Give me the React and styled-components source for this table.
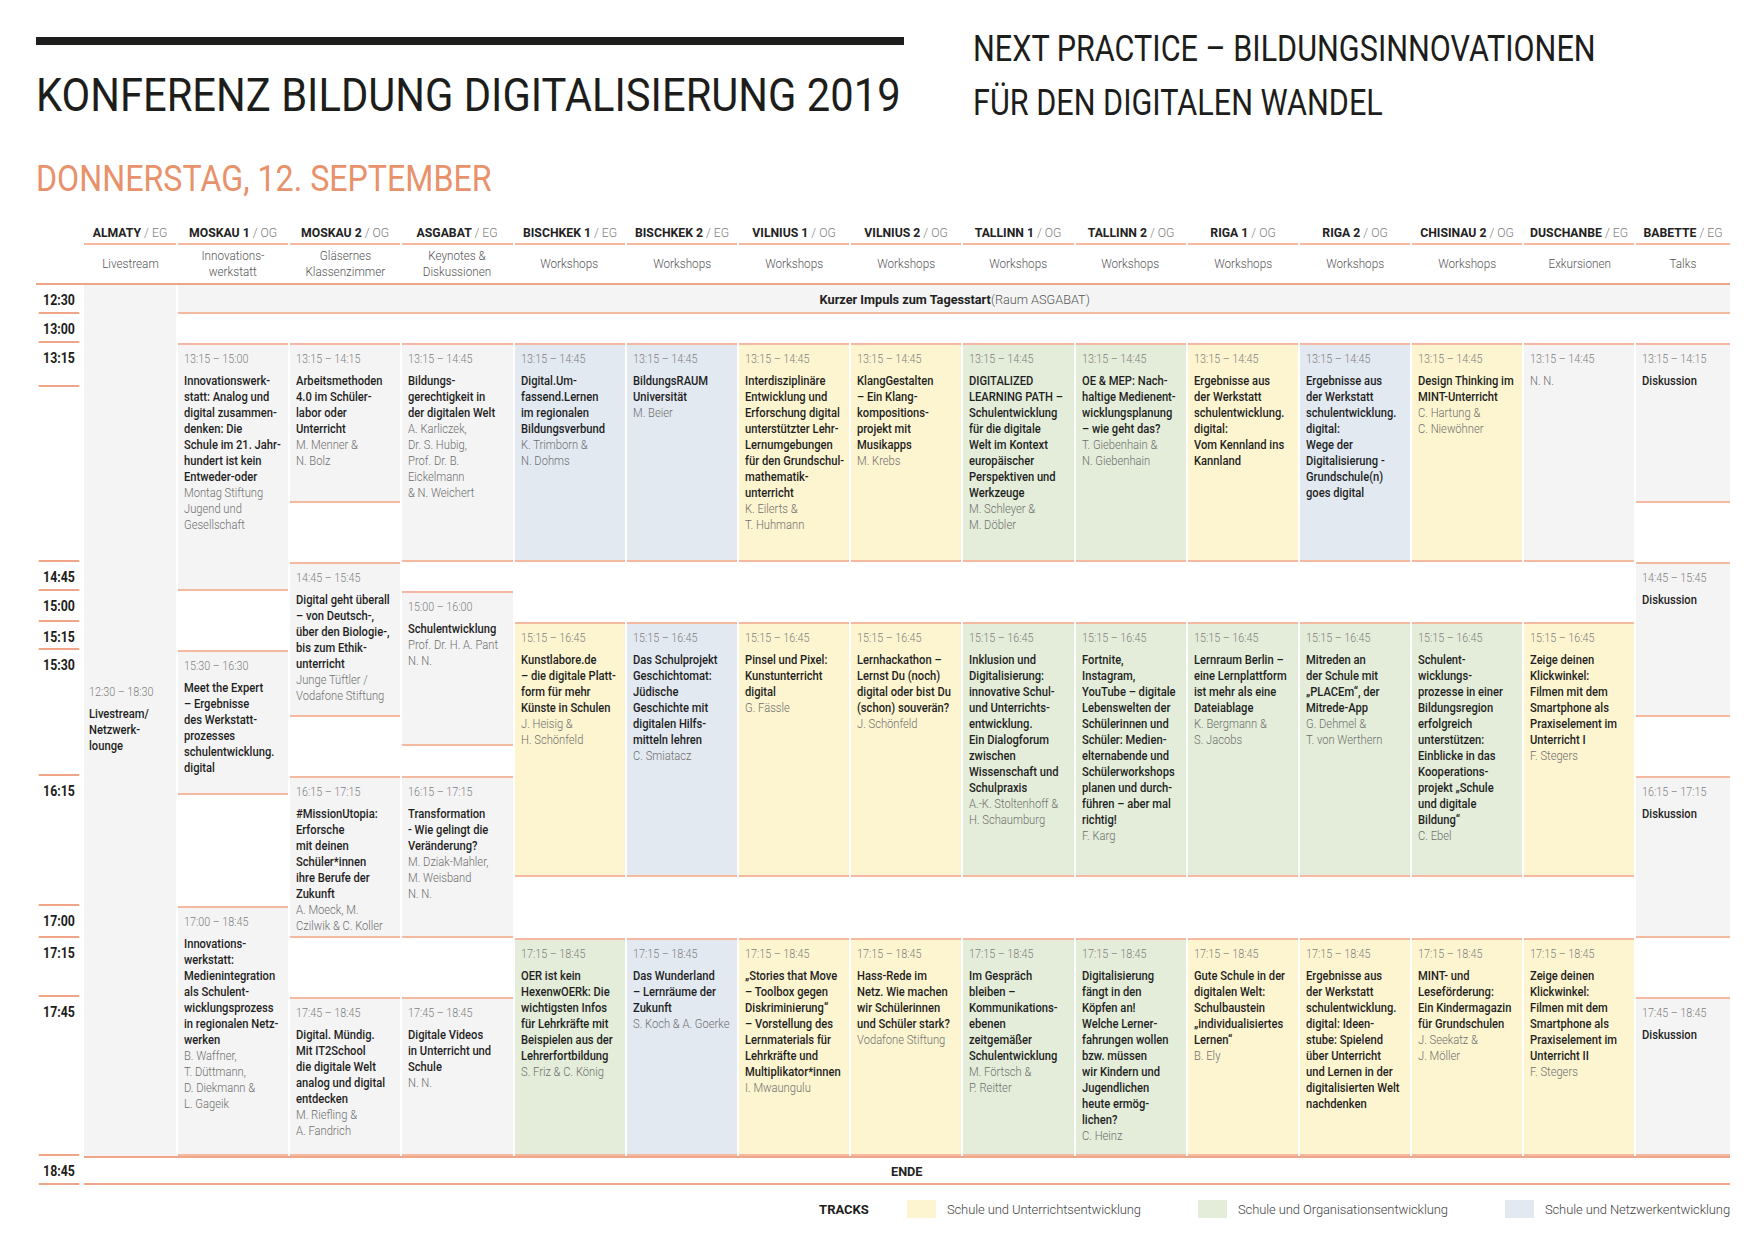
import React from "react";
import styled, { createGlobalStyle, css } from "styled-components";

const FONT = `Roboto, "Liberation Sans", Arial, sans-serif`;

const Global = createGlobalStyle`
  * { box-sizing: border-box; }
  body {
    margin: 0;
    background: #fff;
    font-family: ${FONT};
    color: #222;
  }
`;

const LINE = "#efa587";
const SOFT = "#f4b9a0";
const TONES = {
  grey: "#f4f4f4",
  yellow: "#fdf5cf",
  green: "#e3edd9",
  blue: "#e2e9f1",
};

// the print uses a semi condensed face; squeeze Roboto to the same widths
const narrow = (k, origin = "0 0") => css`
  transform: scaleX(${k});
  transform-origin: ${origin};
`;

const Page = styled.div`
  width: 1753px;
  height: 1240px;
  padding: 20px 23px 0 36px;
  overflow: hidden;
`;

const Top = styled.header`
  display: flex;
  align-items: flex-start;
`;

const TitleBlock = styled.div`
  flex: 0 0 868px;
  min-width: 0;
  padding-top: 17px;
`;

const Bar = styled.div`
  height: 8px;
  background: #1d1d1b;
`;

const Title = styled.h1`
  margin: 25px 0 0;
  font-size: 47px;
  line-height: 50px;
  font-weight: 400;
  white-space: nowrap;
  color: #1d1d1b;
  ${narrow(0.887)}
`;

const Claim = styled.div`
  margin: 2px 0 0 69px;
  font-size: 36px;
  line-height: 54px;
  font-weight: 400;
  white-space: nowrap;
  color: #1d1d1b;
  ${narrow(0.85)}
`;

const Day = styled.h2`
  margin: 29px 0 0;
  font-size: 37px;
  line-height: 40px;
  font-weight: 400;
  white-space: nowrap;
  color: #e8926b;
  ${narrow(0.87)}
`;

const COLS = "46px 92px repeat(13, 110.2px) 94px";

const HeadGrid = styled.div`
  margin-top: 25px;
  display: grid;
  grid-template-columns: ${COLS};
  grid-template-rows: 21px 38px;
  column-gap: 2px;
  border-bottom: 2px solid ${LINE};
`;

const RoomName = styled.div`
  grid-row: 1;
  grid-column: ${(p) => p.$col};
  padding-top: 1px;
  border-bottom: 2px solid ${SOFT};
  text-align: center;
  font-size: 13px;
  line-height: 16px;
  font-weight: 700;
  white-space: nowrap;
  span {
    font-weight: 300;
    color: #7d7d7d;
  }
  & > div {
    ${narrow(0.94, "50% 0")}
  }
`;

const RoomKind = styled.div`
  grid-row: 2;
  grid-column: ${(p) => p.$col};
  display: flex;
  flex-direction: column;
  justify-content: center;
  align-items: center;
  font-size: 13px;
  line-height: 16px;
  font-weight: 300;
  color: #555;
  white-space: nowrap;
  & > div {
    ${narrow(0.9, "50% 0")}
  }
`;

const Body = styled.div`
  display: grid;
  grid-template-columns: ${COLS};
  grid-template-rows: 29px 842px 29px;
  column-gap: 2px;
`;

const TimeCol = styled.div`
  grid-column: 1;
  grid-row: 1 / 4;
  display: flex;
  flex-direction: column;
`;

const TimeCell = styled.div`
  height: ${(p) => p.$h}px;
  border-bottom: 2px solid ${LINE};
  padding-top: 6px;
  text-align: center;
  font-size: 14px;
  line-height: 18px;
  font-weight: 700;
  color: #1d1d1b;
  ${narrow(0.88, "50% 0")}
`;

const Livestream = styled.div`
  grid-column: 2;
  grid-row: 1 / 3;
  background: ${TONES.grey};
  display: flex;
  flex-direction: column;
  justify-content: center;
  padding: 0 0 4px 5px;
  font-size: 13px;
  line-height: 16px;
  white-space: nowrap;
`;

const Impulse = styled.div`
  grid-column: 3 / 17;
  grid-row: 1;
  background: ${TONES.grey};
  border-bottom: 2px solid ${SOFT};
  display: flex;
  align-items: center;
  justify-content: center;
  font-size: 13.5px;
  font-weight: 700;
  white-space: nowrap;
  & > div {
    ${narrow(0.94, "50% 50%")}
  }
  span {
    font-weight: 300;
    color: #555;
  }
`;

const RoomCol = styled.div`
  grid-row: 2;
  grid-column: ${(p) => p.$col};
  display: flex;
  flex-direction: column;
`;

const Gap = styled.div`
  height: ${(p) => p.$h}px;
`;

const Session = styled.div`
  height: ${(p) => p.$h}px;
  background: ${(p) => TONES[p.$tone]};
  border-top: 2px solid ${SOFT};
  border-bottom: 2px solid ${SOFT};
  padding: 6px 0 0 6px;
  font-size: 13px;
  line-height: 16px;
  white-space: nowrap;
`;

const Inner = styled.div`
  width: 116%;
  ${narrow(0.86)}
`;

const When = styled.div`
  color: #7f7f7f;
  font-size: 12.5px;
  font-weight: 300;
  margin-bottom: 6px;
`;

const Topic = styled.div`
  font-weight: 500;
  color: #1f1f1f;
`;

const Speakers = styled.div`
  font-weight: 300;
  color: #6f6f6f;
`;

const End = styled.div`
  grid-column: 2 / 17;
  grid-row: 3;
  border-top: 2px solid ${LINE};
  border-bottom: 2px solid ${LINE};
  display: flex;
  align-items: center;
  justify-content: center;
  font-size: 13.5px;
  font-weight: 700;
  & > div {
    ${narrow(0.94, "50% 50%")}
  }
`;

const Legend = styled.div`
  margin-top: 15px;
  display: flex;
  justify-content: flex-end;
  align-items: center;
  font-size: 13px;
  letter-spacing: -0.1px;
  font-weight: 300;
  color: #444;
  white-space: nowrap;
`;

const LegendLabel = styled.span`
  font-weight: 700;
  letter-spacing: 0;
  color: #1d1d1b;
  margin-right: 38px;
`;

const Track = styled.span`
  display: flex;
  align-items: center;
  gap: 11px;
  & + & {
    margin-left: 57px;
  }
`;

const Swatch = styled.i`
  width: 29px;
  height: 18px;
  background: ${(p) => TONES[p.$tone]};
`;

const rooms = [
  { name: "ALMATY", floor: "EG", kind: ["Livestream"] },
  { name: "MOSKAU 1", floor: "OG", kind: ["Innovations-", "werkstatt"] },
  { name: "MOSKAU 2", floor: "OG", kind: ["Gläsernes", "Klassenzimmer"] },
  { name: "ASGABAT", floor: "EG", kind: ["Keynotes &", "Diskussionen"] },
  { name: "BISCHKEK 1", floor: "EG", kind: ["Workshops"] },
  { name: "BISCHKEK 2", floor: "EG", kind: ["Workshops"] },
  { name: "VILNIUS 1", floor: "OG", kind: ["Workshops"] },
  { name: "VILNIUS 2", floor: "OG", kind: ["Workshops"] },
  { name: "TALLINN 1", floor: "OG", kind: ["Workshops"] },
  { name: "TALLINN 2", floor: "OG", kind: ["Workshops"] },
  { name: "RIGA 1", floor: "OG", kind: ["Workshops"] },
  { name: "RIGA 2", floor: "OG", kind: ["Workshops"] },
  { name: "CHISINAU 2", floor: "OG", kind: ["Workshops"] },
  { name: "DUSCHANBE", floor: "EG", kind: ["Exkursionen"] },
  { name: "BABETTE", floor: "EG", kind: ["Talks"] },
];

const times = [
  [29, "12:30"],
  [29, "13:00"],
  [44, "13:15"],
  [175, ""],
  [29, "14:45"],
  [31, "15:00"],
  [28, "15:15"],
  [126, "15:30"],
  [130, "16:15"],
  [32, "17:00"],
  [59, "17:15"],
  [159, "17:45"],
  [29, "18:45"],
];

// standard workshop rhythm: 13:15-14:45, 15:15-16:45, 17:15-18:45
const ws = (a, b, c) => [
  { h: 29 },
  { h: 219, time: "13:15 – 14:45", ...a },
  { h: 60 },
  { h: 255, time: "15:15 – 16:45", ...b },
  { h: 61 },
  { h: 218, time: "17:15 – 18:45", ...c },
];

const columns = [
  [
    { h: 29 },
    {
      h: 248,
      time: "13:15 – 15:00",
      tone: "grey",
      title: ["Innovationswerk-", "statt: Analog und", "digital zusammen-", "denken: Die", "Schule im 21. Jahr-", "hundert ist kein", "Entweder-oder"],
      by: ["Montag Stiftung", "Jugend und", "Gesellschaft"],
    },
    { h: 59 },
    {
      h: 145,
      time: "15:30 – 16:30",
      tone: "grey",
      title: ["Meet the Expert", "– Ergebnisse", "des Werkstatt-", "prozesses", "schulentwicklung.", "digital"],
    },
    { h: 111 },
    {
      h: 250,
      time: "17:00 – 18:45",
      tone: "grey",
      title: ["Innovations-", "werkstatt:", "Medienintegration", "als Schulent-", "wicklungsprozess", "in regionalen Netz-", "werken"],
      by: ["B. Waffner,", "T. Düttmann,", "D. Diekmann &", "L. Gageik"],
    },
  ],
  [
    { h: 29 },
    {
      h: 160,
      time: "13:15 – 14:15",
      tone: "grey",
      title: ["Arbeitsmethoden", "4.0 im Schüler-", "labor oder", "Unterricht"],
      by: ["M. Menner &", "N. Bolz"],
    },
    { h: 59 },
    {
      h: 155,
      time: "14:45 – 15:45",
      tone: "grey",
      title: ["Digital geht überall", "– von Deutsch-,", "über den Biologie-,", "bis zum Ethik-", "unterricht"],
      by: ["Junge Tüftler /", "Vodafone Stiftung"],
    },
    { h: 59 },
    {
      h: 162,
      time: "16:15 – 17:15",
      tone: "grey",
      title: ["#MissionUtopia:", "Erforsche", "mit deinen", "Schüler*innen", "ihre Berufe der", "Zukunft"],
      by: ["A. Moeck, M.", "Czilwik & C. Koller"],
    },
    { h: 59 },
    {
      h: 159,
      time: "17:45 – 18:45",
      tone: "grey",
      title: ["Digital. Mündig.", "Mit IT2School", "die digitale Welt", "analog und digital", "entdecken"],
      by: ["M. Riefling &", "A. Fandrich"],
    },
  ],
  [
    { h: 29 },
    {
      h: 219,
      time: "13:15 – 14:45",
      tone: "grey",
      title: ["Bildungs-", "gerechtigkeit in", "der digitalen Welt"],
      by: ["A. Karliczek,", "Dr. S. Hubig,", "Prof. Dr. B.", "Eickelmann", "& N. Weichert"],
    },
    { h: 29 },
    {
      h: 155,
      time: "15:00 – 16:00",
      tone: "grey",
      title: ["Schulentwicklung"],
      by: ["Prof. Dr. H. A. Pant", "N. N."],
    },
    { h: 30 },
    {
      h: 162,
      time: "16:15 – 17:15",
      tone: "grey",
      title: ["Transformation", "- Wie gelingt die", "Veränderung?"],
      by: ["M. Dziak-Mahler,", "M. Weisband", "N. N."],
    },
    { h: 59 },
    {
      h: 159,
      time: "17:45 – 18:45",
      tone: "grey",
      title: ["Digitale Videos", "in Unterricht und", "Schule"],
      by: ["N. N."],
    },
  ],
  ws(
    { tone: "blue", title: ["Digital.Um-", "fassend.Lernen", "im regionalen", "Bildungsverbund"], by: ["K. Trimborn &", "N. Dohms"] },
    { tone: "yellow", title: ["Kunstlabore.de", "– die digitale Platt-", "form für mehr", "Künste in Schulen"], by: ["J. Heisig &", "H. Schönfeld"] },
    { tone: "green", title: ["OER ist kein", "HexenwOERk: Die", "wichtigsten Infos", "für Lehrkräfte mit", "Beispielen aus der", "Lehrerfortbildung"], by: ["S. Friz & C. König"] }
  ),
  ws(
    { tone: "blue", title: ["BildungsRAUM", "Universität"], by: ["M. Beier"] },
    { tone: "blue", title: ["Das Schulprojekt", "Geschichtomat:", "Jüdische", "Geschichte mit", "digitalen Hilfs-", "mitteln lehren"], by: ["C. Smiatacz"] },
    { tone: "blue", title: ["Das Wunderland", "– Lernräume der", "Zukunft"], by: ["S. Koch & A. Goerke"] }
  ),
  ws(
    { tone: "yellow", title: ["Interdisziplinäre", "Entwicklung und", "Erforschung digital", "unterstützter Lehr-", "Lernumgebungen", "für den Grundschul-", "mathematik-", "unterricht"], by: ["K. Eilerts &", "T. Huhmann"] },
    { tone: "yellow", title: ["Pinsel und Pixel:", "Kunstunterricht", "digital"], by: ["G. Fässle"] },
    { tone: "yellow", title: ["„Stories that Move", "– Toolbox gegen", "Diskriminierung“", "– Vorstellung des", "Lernmaterials für", "Lehrkräfte und", "Multiplikator*innen"], by: ["I. Mwaungulu"] }
  ),
  ws(
    { tone: "yellow", title: ["KlangGestalten", "– Ein Klang-", "kompositions-", "projekt mit", "Musikapps"], by: ["M. Krebs"] },
    { tone: "yellow", title: ["Lernhackathon –", "Lernst Du (noch)", "digital oder bist Du", "(schon) souverän?"], by: ["J. Schönfeld"] },
    { tone: "yellow", title: ["Hass-Rede im", "Netz. Wie machen", "wir Schülerinnen", "und Schüler stark?"], by: ["Vodafone Stiftung"] }
  ),
  ws(
    { tone: "green", title: ["DIGITALIZED", "LEARNING PATH –", "Schulentwicklung", "für die digitale", "Welt im Kontext", "europäischer", "Perspektiven und", "Werkzeuge"], by: ["M. Schleyer &", "M. Döbler"] },
    { tone: "green", title: ["Inklusion und", "Digitalisierung:", "innovative Schul-", "und Unterrichts-", "entwicklung.", "Ein Dialogforum", "zwischen", "Wissenschaft und", "Schulpraxis"], by: ["A.-K. Stoltenhoff &", "H. Schaumburg"] },
    { tone: "green", title: ["Im Gespräch", "bleiben –", "Kommunikations-", "ebenen", "zeitgemäßer", "Schulentwicklung"], by: ["M. Förtsch &", "P. Reitter"] }
  ),
  ws(
    { tone: "green", title: ["OE & MEP: Nach-", "haltige Medienent-", "wicklungsplanung", "– wie geht das?"], by: ["T. Giebenhain &", "N. Giebenhain"] },
    { tone: "green", title: ["Fortnite,", "Instagram,", "YouTube – digitale", "Lebenswelten der", "Schülerinnen und", "Schüler: Medien-", "elternabende und", "Schülerworkshops", "planen und durch-", "führen – aber mal", "richtig!"], by: ["F. Karg"] },
    { tone: "green", title: ["Digitalisierung", "fängt in den", "Köpfen an!", "Welche Lerner-", "fahrungen wollen", "bzw. müssen", "wir Kindern und", "Jugendlichen", "heute ermög-", "lichen?"], by: ["C. Heinz"] }
  ),
  ws(
    { tone: "yellow", title: ["Ergebnisse aus", "der Werkstatt", "schulentwicklung.", "digital:", "Vom Kennland ins", "Kannland"] },
    { tone: "green", title: ["Lernraum Berlin –", "eine Lernplattform", "ist mehr als eine", "Dateiablage"], by: ["K. Bergmann &", "S. Jacobs"] },
    { tone: "yellow", title: ["Gute Schule in der", "digitalen Welt:", "Schulbaustein", "„individualisiertes", "Lernen“"], by: ["B. Ely"] }
  ),
  ws(
    { tone: "blue", title: ["Ergebnisse aus", "der Werkstatt", "schulentwicklung.", "digital:", "Wege der", "Digitalisierung -", "Grundschule(n)", "goes digital"] },
    { tone: "green", title: ["Mitreden an", "der Schule mit", "„PLACEm“, der", "Mitrede-App"], by: ["G. Dehmel &", "T. von Werthern"] },
    { tone: "yellow", title: ["Ergebnisse aus", "der Werkstatt", "schulentwicklung.", "digital: Ideen-", "stube: Spielend", "über Unterricht", "und Lernen in der", "digitalisierten Welt", "nachdenken"] }
  ),
  ws(
    { tone: "yellow", title: ["Design Thinking im", "MINT-Unterricht"], by: ["C. Hartung &", "C. Niewöhner"] },
    { tone: "green", title: ["Schulent-", "wicklungs-", "prozesse in einer", "Bildungsregion", "erfolgreich", "unterstützen:", "Einblicke in das", "Kooperations-", "projekt „Schule", "und digitale", "Bildung“"], by: ["C. Ebel"] },
    { tone: "yellow", title: ["MINT- und", "Leseförderung:", "Ein Kindermagazin", "für Grundschulen"], by: ["J. Seekatz &", "J. Möller"] }
  ),
  ws(
    { tone: "grey", by: ["N. N."] },
    { tone: "yellow", title: ["Zeige deinen", "Klickwinkel:", "Filmen mit dem", "Smartphone als", "Praxiselement im", "Unterricht I"], by: ["F. Stegers"] },
    { tone: "yellow", title: ["Zeige deinen", "Klickwinkel:", "Filmen mit dem", "Smartphone als", "Praxiselement im", "Unterricht II"], by: ["F. Stegers"] }
  ),
  [
    { h: 29 },
    { h: 160, time: "13:15 – 14:15", tone: "grey", title: ["Diskussion"] },
    { h: 59 },
    { h: 155, time: "14:45 – 15:45", tone: "grey", title: ["Diskussion"] },
    { h: 59 },
    { h: 162, time: "16:15 – 17:15", tone: "grey", title: ["Diskussion"] },
    { h: 59 },
    { h: 159, time: "17:45 – 18:45", tone: "grey", title: ["Diskussion"] },
  ],
];

const Lines = ({ items }) => items.map((t, i) => <div key={i}>{t}</div>);

const Block = ({ item }) => {
  if (!item.time) return <Gap $h={item.h} />;
  return (
    <Session $h={item.h} $tone={item.tone}>
      <Inner>
        <When>{item.time}</When>
        {item.title && (
          <Topic>
            <Lines items={item.title} />
          </Topic>
        )}
        {item.by && (
          <Speakers>
            <Lines items={item.by} />
          </Speakers>
        )}
      </Inner>
    </Session>
  );
};

export default function App() {
  return (
    <Page>
      <Global />
      <Top>
        <TitleBlock>
          <Bar />
          <Title>KONFERENZ BILDUNG DIGITALISIERUNG 2019</Title>
        </TitleBlock>
        <Claim>
          NEXT PRACTICE – BILDUNGSINNOVATIONEN
          <br />
          FÜR DEN DIGITALEN WANDEL
        </Claim>
      </Top>
      <Day>DONNERSTAG, 12. SEPTEMBER</Day>

      <HeadGrid>
        {rooms.map((r, i) => (
          <React.Fragment key={r.name}>
            <RoomName $col={i + 2}>
              <div>
                {r.name} <span>/ {r.floor}</span>
              </div>
            </RoomName>
            <RoomKind $col={i + 2}>
              <Lines items={r.kind} />
            </RoomKind>
          </React.Fragment>
        ))}
      </HeadGrid>

      <Body>
        <TimeCol>
          {times.map(([h, t], i) => (
            <TimeCell key={i} $h={h}>
              {t}
            </TimeCell>
          ))}
        </TimeCol>
        <Livestream>
          <Inner>
            <When>12:30 – 18:30</When>
            <Topic>
              <Lines items={["Livestream/", "Netzwerk-", "lounge"]} />
            </Topic>
          </Inner>
        </Livestream>
        <Impulse>
          <div>
            Kurzer Impuls zum Tagesstart<span>(Raum ASGABAT)</span>
          </div>
        </Impulse>
        {columns.map((col, i) => (
          <RoomCol key={i} $col={i + 3}>
            {col.map((item, j) => (
              <Block key={j} item={item} />
            ))}
          </RoomCol>
        ))}
        <End>
          <div>ENDE</div>
        </End>
      </Body>

      <Legend>
        <LegendLabel>TRACKS</LegendLabel>
        <Track>
          <Swatch $tone="yellow" />
          Schule und Unterrichtsentwicklung
        </Track>
        <Track>
          <Swatch $tone="green" />
          Schule und Organisationsentwicklung
        </Track>
        <Track>
          <Swatch $tone="blue" />
          Schule und Netzwerkentwicklung
        </Track>
      </Legend>
    </Page>
  );
}
